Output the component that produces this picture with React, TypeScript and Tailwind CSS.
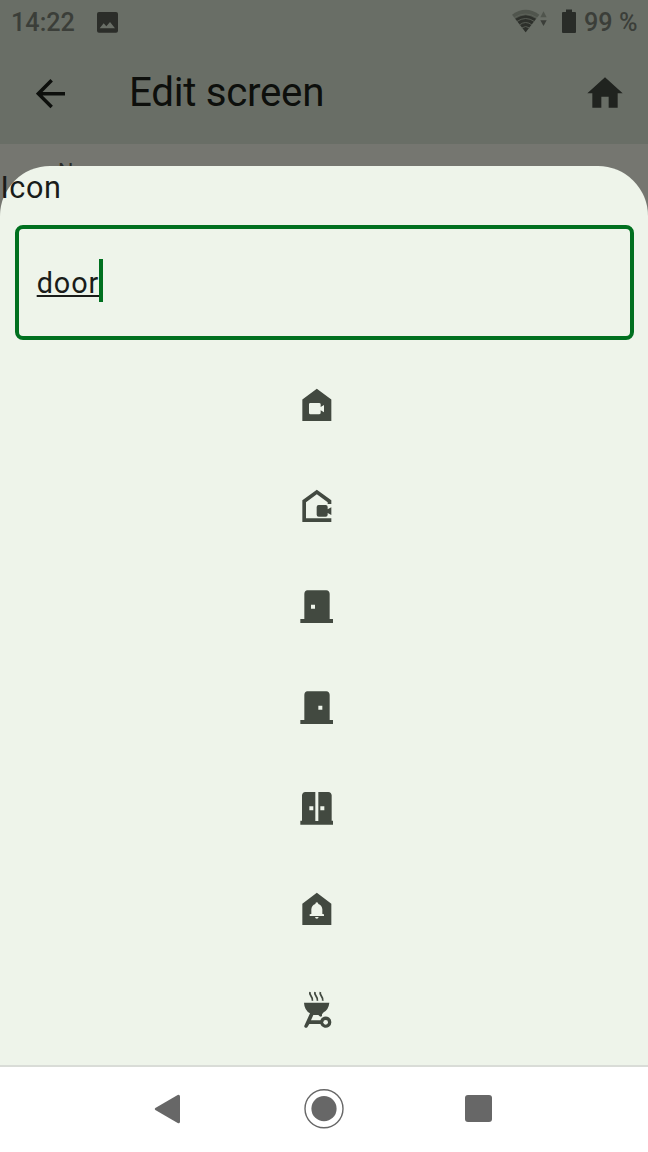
import type { ReactNode } from 'react';

function Glyph({ children }: { children: ReactNode }) {
  return (
    <svg viewBox="0 0 168 180" className="block h-[60px] w-[56px] fill-[#424940]">
      {children}
    </svg>
  );
}

function Door({ knob }: { knob: number }) {
  return (
    <Glyph>
      <path
        fillRule="evenodd"
        d={`M52 40H109Q118 41 119 50V126H129V138H31V126H43V50Q44 41 52 40ZM${knob} 83H${knob + 12}V95H${knob}Z`}
      />
    </Glyph>
  );
}

function CameraHouse() {
  return (
    <Glyph>
      <path
        fillRule="evenodd"
        d="M80.500 41L124 73.500V138H37V73.500ZM61 84Q57 84 57 88V113Q57 118 61 118H87Q92 118 92 113V106L102 112V90L92 96V88Q92 84 87 84Z"
      />
    </Glyph>
  );
}

function OutdoorCamera() {
  return (
    <Glyph>
      <path d="M80.500 41L124 73V84H113V79L80.500 54.500L48 79V127H124V138H37V73ZM86 87H107Q113 87 113 93V100L124 94V117L113 111V116Q113 122 107 122H86Q80 122 80 116V93Q80 87 86 87Z" />
    </Glyph>
  );
}

function DoubleDoor() {
  return (
    <Glyph>
      <path
        fillRule="evenodd"
        d="M46 42H76V129H85V42H115Q124 43 125 52V128H129V140H31V128H36V52Q37 43 46 42ZM58 85H70V97H58ZM91 85H103V97H91Z"
      />
    </Glyph>
  );
}

function BellHouse() {
  return (
    <Glyph>
      <path
        fillRule="evenodd"
        d="M80.500 38.500L124 71V135H37V71ZM80.500 67Q76 67 76 72Q65 76 64 88V102L59 103V108H102V103L97 102V88Q96 76 85 72Q85 67 80.500 67ZM75 111Q76 116 80.500 116Q85 116 86 111Z"
      />
    </Glyph>
  );
}

function Grill() {
  return (
    <Glyph>
      <path d="M42 68H118Q116 88 101 97L96 103V108Q93 112 89 109L85 105H70L63 121H91A17 17 0 1 1 91 132H58L52 142Q48 145 44 142Q42 140 43 137L60 100Q43 90 42 68Z" />
      <circle cx="107" cy="127" r="7" fill="#eef4ea" />
      <path
        d="M60 36C56 46 70 50 67 62M75 36C71 46 85 50 82 62M91 36C87 46 101 50 98 62"
        fill="none"
        stroke="#424940"
        strokeWidth="5.500"
      />
    </Glyph>
  );
}

function StatusBar() {
  return (
    <div className="flex h-[44px] justify-between text-[25.200px] leading-[46px] font-medium text-[#3b3e39]">
      <div className="flex">
        <span className="ml-[11px] w-[86px]">14:22</span>
        <svg viewBox="0 0 63 63" className="mt-[11.500px] h-[21px] w-[21px]">
          <rect width="63" height="62" rx="6" fill="#2b2d29" />
          <path d="M8 49L20 34L28 43L39 30L54 49Z" fill="#696e66" />
        </svg>
      </div>
      <div className="flex">
        <svg viewBox="0 0 105 75" className="mt-[9px] mr-[15px] h-[25px] w-[35px]">
          <path d="M0 17Q41 -12 82 17L41 70Z" fill="#50554d" />
          <path d="M10 29Q41 8 72 29L41 70Z" fill="#2d302b" />
          <path d="M7 26Q41 4 75 26M14 38Q41 19 68 38M22 48Q41 33 60 48M29 57Q41 48 53 57" fill="none" stroke="#5f645c" strokeWidth="2.500" />
          <path d="M85 25L94.500 7L104 25Z" fill="#50554d" />
          <path d="M85 34H104L94.500 51Z" fill="#3b3e39" />
        </svg>
        <svg viewBox="0 0 14 24" className="mt-[9px] mr-[8px] h-[24px] w-[14px] fill-[#292c28]">
          <path d="M4 .5H10V3H13Q14 3 14 4V23Q14 24 13 24H1Q0 24 0 23V4Q0 3 1 3H4Z" />
        </svg>
        <span className="w-[64px] whitespace-nowrap">99 %</span>
      </div>
    </div>
  );
}

function AppBar() {
  return (
    <div className="flex h-[100px] items-start">
      <svg viewBox="0 0 90 90" className="mt-[35px] ml-[36px] h-[30px] w-[30px]">
        <path d="M87 44H8M47 4L7 44L47 84" fill="none" stroke="#0d0f0c" strokeWidth="10.500" />
      </svg>
      <h1 className="ml-[63px] flex-1 text-[40.300px] leading-[97px] font-normal tracking-[-0.300px] text-[#0d0f0c]">Edit screen</h1>
      <svg viewBox="0 0 108 93" className="mt-[33px] mr-[25px] h-[31px] w-[36px] fill-[#20231f]">
        <path d="M54 1L107 49H92V92H65V59H43V92H16V49H1Z" />
      </svg>
    </div>
  );
}

function NavigationBar() {
  return (
    <nav className="flex h-[87px] items-start border-t-2 border-[#d9dcd7] bg-white">
      <svg viewBox="0 0 78 90" className="mt-[27px] ml-[154px] h-[30px] w-[26px] fill-[#676767]">
        <path d="M4 42L71 3Q77 0 78 7V83Q77 90 71 87L4 48Q0 45 4 42Z" />
      </svg>
      <svg viewBox="0 0 40 40" className="mt-[22px] ml-[124px] size-[40px]">
        <circle cx="20" cy="19.700" r="19" fill="none" stroke="#676767" strokeWidth="1.400" />
        <circle cx="20" cy="19.700" r="12.600" fill="#676767" />
      </svg>
      <div className="mt-[28px] ml-[121px] size-[27px] rounded-[3px] bg-[#676767]" />
    </nav>
  );
}

export default function App() {
  return (
    <div className="relative flex h-[1152px] w-[648px] flex-col overflow-hidden bg-[#757670] font-['Roboto',sans-serif]">
      <header className="h-[144px] bg-[#696e66]">
        <StatusBar />
        <AppBar />
      </header>
      <div className="flex-1 pt-[15px] pl-[58px] text-[21.600px] leading-[25px] text-[#292b27]">Name</div>
      <section className="absolute inset-x-0 top-[165.600px] bottom-[87px] rounded-t-[50px] bg-[#eef4ea] text-[28.800px] tracking-[0.900px] text-[#1a1c19]">
        <h2 className="h-[59.400px] pl-[0.400px] text-[30.600px] leading-[43px] font-normal tracking-[0.600px]">Icon</h2>
        <div className="mx-[14.500px] flex h-[115px] items-center rounded-[8px] border-[4px] border-[#00701f] pl-[18.200px]">
          <span className="pt-[2px] underline decoration-[1.500px] underline-offset-[2px]">door</span>
          <span className="mb-[4px] h-[43px] w-[3.600px] bg-[#00701f]" />
        </div>
        <div className="ml-[290px] flex flex-col items-start gap-[41px] pt-[35px]">
          <CameraHouse />
          <OutdoorCamera />
          <Door knob={63} />
          <Door knob={85} />
          <div className="-mt-px"><DoubleDoor /></div>
          <div className="mt-px"><BellHouse /></div>
          <div className="-mt-px"><Grill /></div>
        </div>
      </section>
      <NavigationBar />
    </div>
  );
}
